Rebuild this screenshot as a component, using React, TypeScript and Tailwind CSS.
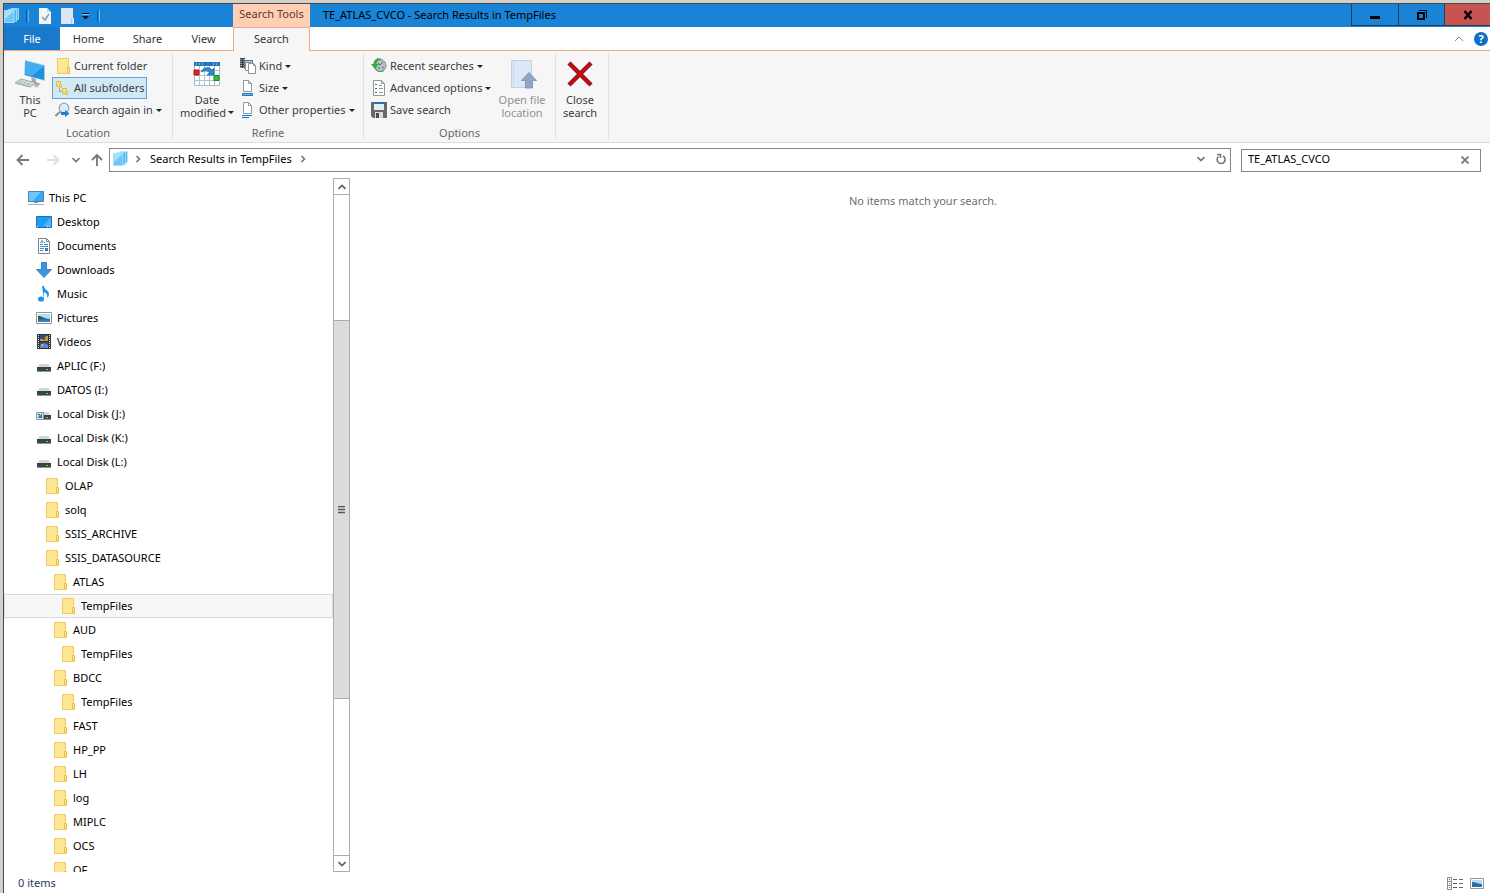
import React from 'react';
import clsx from 'clsx';

type IconProps = { className?: string };

const FolderIcon: React.FC<IconProps> = ({ className = 'size-4' }) => (
  <svg viewBox="0 0 16 16" className={className} aria-hidden="true">
    <path d="M2.500 0.500h11v15h-11z" fill="#fde694" stroke="#f0cb5c" />
    <path d="M12.500 9.500h2v6h-2z" fill="#fde694" stroke="#e8bd45" />
  </svg>
);

const SubfoldersIcon: React.FC = () => (
  <svg viewBox="0 0 16 16" className="size-4" aria-hidden="true">
    <path d="M4.500 6v5.500h4" fill="none" stroke="#8aa9c0" />
    <path d="M1.500 1.500h4v5h-4zM7.500 8.500h4v5h-4z" fill="#fbe28a" stroke="#e6bb40" />
    <path d="M4.500 4.500h2v3h-2zM10.500 11.500h2v3h-2z" fill="#fdeaa0" stroke="#e6bb40" />
  </svg>
);

const SearchFolderIcon: React.FC<IconProps> = ({ className = 'size-4' }) => (
  <svg viewBox="0 0 16 16" className={className} aria-hidden="true">
    <path d="M7 0.500h7.500v11H7z" fill="#5cb8ee" stroke="#c2e9ff" strokeWidth="0.700" />
    <path d="M4 1.500h8.500v12H4z" fill="#4eb3ef" stroke="#bfe7fd" strokeWidth="0.700" />
    <path d="M0.500 2.500h9.500v12h-9.500z" fill="#6fc9f7" stroke="#a5ddfa" />
    <path d="M1 3h8.500L1 11z" fill="#a3e0fb" />
  </svg>
);

const ComputerIcon: React.FC = () => (
  <svg viewBox="0 0 16 16" className="size-4" aria-hidden="true">
    <path d="M0.500 1.500h15v10h-15z" fill="#35a8f5" stroke="#4d86a8" />
    <path d="M1 2h12L5 11H1z" fill="#6cc5fb" />
    <path d="M6 12.500h4" stroke="#7897a8" />
    <path d="M0 14.500h16" stroke="#8fb4c5" />
  </svg>
);

const DesktopIcon: React.FC = () => (
  <svg viewBox="0 0 16 16" className="size-4" aria-hidden="true">
    <path d="M0.500 2.500h15v11h-15z" fill="#1e9bf3" stroke="#1673c4" />
    <path d="M15 3v9L7 12z" fill="#4cb4fa" />
    <path d="M1 12.500h1M11 12.500h1M13 12.500h1" stroke="#fff" />
  </svg>
);

const DocumentsIcon: React.FC = () => (
  <svg viewBox="0 0 16 16" className="size-4" aria-hidden="true">
    <path d="M2.500 0.500h8l3 3v12h-11z" fill="#fff" stroke="#7d8588" />
    <path d="M10.500 0.500v3h3" fill="none" stroke="#7d8588" />
    <path d="M4 6.500h3M8 4.500h1M8 6.500h4M4 8.500h8M4 10.500h4M4 12.500h3" stroke="#3292c9" />
    <path d="M4.500 5l1.500-2.500L7 5" fill="none" stroke="#3292c9" />
    <path d="M9 10h3v3H9z" fill="#467c91" />
  </svg>
);

const DownloadsIcon: React.FC = () => (
  <svg viewBox="0 0 16 16" className="size-4" aria-hidden="true">
    <path d="M5.500 0.500h5v7h5L8 15.500 0.500 7.500h5z" fill="#3c96df" stroke="#3b83c4" />
  </svg>
);

const MusicIcon: React.FC = () => (
  <svg viewBox="0 0 16 16" className="size-4" aria-hidden="true">
    <path d="M6 0h2c0 4 5 4 5 8 0 2-1 3-2 4 1-4-1-5-3-6v7" fill="#1697ea" />
    <ellipse cx="5" cy="13" rx="3" ry="2.600" fill="#1697ea" />
  </svg>
);

const PictureIcon: React.FC = () => (
  <svg viewBox="0 0 16 16" className="size-4" aria-hidden="true">
    <path d="M0.500 2.500h15v11h-15z" fill="#fff" stroke="#8b989f" />
    <path d="M2 4h12v8H2z" fill="#b5dcf4" />
    <path d="M2 6c4 0 7 3 12 3v3H2z" fill="#2e6f9f" />
    <path d="M2 10c5 1 8-1 12 0v2H2z" fill="#3c7dc0" />
    <path d="M2 6c3 0 4 2 7 2.500L2 9z" fill="#315a48" />
  </svg>
);

const VideosIcon: React.FC = () => (
  <svg viewBox="0 0 16 16" className="size-4" aria-hidden="true">
    <path d="M1 0h14v15H1z" fill="#333" />
    <path d="M2.500 1v14M13.500 1v14" stroke="#eee" strokeDasharray="1 1" />
    <path d="M4 1h8v6H4zM4 8h8v6H4z" fill="#264f93" />
    <path d="M4 5h4l2-3h2v5H4z" fill="#c99e35" />
    <path d="M7 4h2v2H7z" fill="#b83524" />
    <path d="M4 12l4-3 4 2v3H4z" fill="#658acc" />
    <path d="M5 10h2v2H5z" fill="#d4b345" />
  </svg>
);

const DriveIcon: React.FC<{ shared?: boolean }> = ({ shared }) => (
  <svg viewBox="0 0 16 16" className="size-4" aria-hidden="true">
    <path d="M3.500 6h9l2 3.500h-13z" fill="#d3d6d6" />
    <path d="M1 9h14v5H1z" fill="#3b4242" />
    <path d="M1 13.500h14" stroke="#8b9494" />
    <path d="M10 11h2v1h-2z" fill="#5de35b" />
    {shared && (
      <>
        <path d="M0.500 6.500h7v7h-7z" fill="#d5e3ea" stroke="#8798a1" />
        <path d="M2 12l1-3 1 1 2-3v5z" fill="#397ea8" />
        <path d="M2 8h2v1H2z" fill="#4e5a60" />
      </>
    )}
  </svg>
);

const LargePcIcon: React.FC = () => (
  <svg viewBox="0 0 32 32" className="size-8" aria-hidden="true">
    <path d="M11 1l20 5v16L10 16z" fill="#b4cad6" />
    <path d="M11 2l19 5v14l-19-5z" fill="#1c91e6" />
    <path d="M11 2l19 5-12 10-7-2z" fill="#44adf2" />
    <path d="M17 18l5 2v3l5 2-4 2-9-3 4-2z" fill="#9daeb8" />
    <path d="M7 20l15 4-6 4-15-4z" fill="#e4e8eb" stroke="#9da5aa" />
    <path d="M5 22l14 4M3 23.500l14 4M9 21l-5 4M13 22l-5 4M17 23l-5 4" stroke="#a2a9ae" strokeWidth="0.700" />
    <path d="M22 26l3 1-2 1.500-3-1z" fill="#b0b6ba" />
  </svg>
);

const CalendarIcon: React.FC = () => (
  <svg viewBox="0 0 32 32" className="size-8" aria-hidden="true">
    <path d="M3.500 4.500h25v22h-25z" fill="#fff" stroke="#a6bac9" />
    <path d="M3 3h26v4H3z" fill="#2675bd" />
    <path d="M5 5h1M8 5h1M11 5h1M22 5h1M25 5h1" stroke="#c9e4f7" />
    <path d="M8.500 7v19M13.500 7v19M18.500 7v19M23.500 7v19M4 11.500h24M4 16.500h24M4 21.500h24" stroke="#adc4d3" />
    <path d="M3 11h5v5H3z" fill="#d92727" stroke="#a71515" />
    <path d="M23 16.500h5v5h-5z" fill="#35bd31" stroke="#188c19" />
    <path d="M10 13c2-5 8-6 11-2l2-2v7h-7l2.500-2.500c-2-2-5-2-8.500-0.500z" fill="#2e88cc" stroke="#1d6aaa" strokeWidth="0.700" />
  </svg>
);

const OpenLocationIcon: React.FC = () => (
  <svg viewBox="0 0 32 32" className="size-8" aria-hidden="true">
    <path d="M5.500 1.500h20v27h-20z" fill="#dce7f7" stroke="#c0d3ed" />
    <path d="M7.500 2v26" stroke="#c9d9ef" />
    <path d="M23 13.500l7.500 8h-4v7.500h-7v-7.500h-4z" fill="#91a5c5" stroke="#8499bb" />
  </svg>
);

const CloseSearchIcon: React.FC = () => (
  <svg viewBox="0 0 32 32" className="size-8" aria-hidden="true">
    <path d="M5 4l22 22M27 4L5 26" stroke="#8a0d12" strokeWidth="4.500" />
    <path d="M5.500 4.500l21 21M26.500 4.500l-21 21" stroke="#c20d14" strokeWidth="2.800" />
  </svg>
);

const SearchAgainIcon: React.FC = () => (
  <svg viewBox="0 0 16 16" className="size-4" aria-hidden="true">
    <path d="M5.500 9.500L0.500 14" stroke="#8796a0" strokeWidth="2" />
    <circle cx="9" cy="6" r="4.800" fill="#d8edfa" stroke="#93aab7" strokeWidth="1.300" />
    <path d="M6 10h4V8l4.500 3.500L10 15v-2H6z" fill="#267cc5" />
  </svg>
);

const KindIcon: React.FC = () => (
  <svg viewBox="0 0 16 16" className="size-4" aria-hidden="true">
    <path d="M0 0h5v10H0z" fill="#3b4247" />
    <path d="M1 1v9M4 1v9" stroke="#f1f1f1" strokeDasharray="1 1" />
    <path d="M4.500 2.500h8v8h-8z" fill="#b9c8d0" stroke="#62737c" />
    <path d="M5.500 4.500h5v8h-5z" fill="#fff" stroke="#8a9297" />
    <path d="M8.500 5.500h5l2 2v8h-7z" fill="#fff" stroke="#8a9297" />
    <path d="M13.500 5.500v2h2" fill="none" stroke="#8a9297" />
  </svg>
);

const PageIcon: React.FC<{ kind: 'size' | 'properties' | 'options' }> = ({ kind }) => (
  <svg viewBox="0 0 16 16" className="size-4" aria-hidden="true">
    {kind === 'options' ? (
      <>
        <path d="M2.500 0.500h8l3 3v12h-11z" fill="#fff" stroke="#8f989d" />
        <path d="M10.500 0.500v3h3" fill="none" stroke="#8f989d" />
        <path d="M4 4.500h2M4 8.500h2M4 12.500h2" stroke="#5a656b" />
        <path d="M8 5.500h3M8 8.500h4M8 12.500h4" stroke="#8f989d" />
      </>
    ) : (
      <>
        <path d="M3.500 0.500h5l3 3v8h-8z" fill="#fff" stroke="#92999d" />
        <path d="M8.500 0.500v3h3" fill="none" stroke="#92999d" />
        {kind === 'size' ? (
          <path d="M2.500 13.500h10v2h-10z" stroke="#1678ca" fill="#79b8e8" />
        ) : (
          <path d="M2 13.500h10M2 15.500h7" stroke="#1678ca" />
        )}
      </>
    )}
  </svg>
);

const RecentIcon: React.FC = () => (
  <svg viewBox="0 0 16 16" className="size-4" aria-hidden="true">
    <circle cx="9" cy="7.500" r="6" fill="#b6c2c6" stroke="#7d898e" />
    <path d="M9 7l3-3M9 7l-2-2M7 10h2M11 9l2 1" fill="none" stroke="#58656b" />
    <path d="M11 1C6-1 2.500 2 2.500 6H0l4 5 4-5H5.500C5.500 4 7 2 11 1z" fill="#35ad38" />
    <path d="M5 10.500c1 3 5 4 8 2" fill="none" stroke="#35ad38" />
  </svg>
);

const SaveIcon: React.FC = () => (
  <svg viewBox="0 0 16 16" className="size-4" aria-hidden="true">
    <path d="M0 0h16v16H2l-2-2z" fill="#656a6e" />
    <path d="M3 0h10v8H3z" fill="#e8edf0" />
    <path d="M3 0h10v2H3z" fill="#1675c2" />
    <path d="M4 10h8v6H4z" fill="#d7dbdd" />
    <path d="M5 11h3v5H5z" fill="#484d50" />
  </svg>
);

const Caret: React.FC = () => (
  <svg viewBox="0 0 6 3" className="inline-block h-[3px] w-1.5 shrink-0" aria-hidden="true">
    <path d="M0 0h6L3 3z" fill="#222" />
  </svg>
);

const Chevron: React.FC<{ direction: 'up' | 'down' | 'right'; className?: string }> = ({
  direction,
  className = 'size-2',
}) => (
  <svg viewBox="0 0 8 8" className={className} fill="none" stroke="currentColor" strokeWidth="1.700" aria-hidden="true">
    {direction === 'up' && <path d="M0.500 6L4 2.500 7.500 6" />}
    {direction === 'down' && <path d="M0.500 2L4 5.500 7.500 2" />}
    {direction === 'right' && <path d="M2.500 1l3 3-3 3" />}
  </svg>
);

const Arrow: React.FC<{ direction: 'left' | 'right' | 'up' }> = ({ direction }) => (
  <svg viewBox="0 0 14 14" className="size-3.5" fill="none" stroke="currentColor" strokeWidth="1.800" aria-hidden="true">
    {direction === 'left' && <path d="M13 7H2M6.500 2L1.500 7l5 5" />}
    {direction === 'right' && <path d="M1 7h11M7.500 2l5 5-5 5" />}
    {direction === 'up' && <path d="M7 13V2M2 7l5-5 5 5" />}
  </svg>
);

type CommandProps = {
  icon: React.ReactNode;
  label: string;
  menu?: boolean;
  active?: boolean;
};

const Command: React.FC<CommandProps> = ({ icon, label, menu, active }) => (
  <button
    type="button"
    aria-pressed={active}
    className={clsx(
      'flex h-[22px] items-center gap-[3px] border px-0.5 whitespace-nowrap',
      active ? 'border-[#62a2d8] bg-[#d1e8f5]' : 'border-transparent',
    )}
  >
    {icon}
    <span>{label}</span>
    {menu && <Caret />}
  </button>
);

type BigCommandProps = {
  icon: React.ReactNode;
  lines: [string, string];
  width: string;
  menu?: boolean;
  disabled?: boolean;
};

const BigCommand: React.FC<BigCommandProps> = ({ icon, lines, width, menu, disabled }) => (
  <button
    type="button"
    disabled={disabled}
    className={clsx('flex flex-col items-center pt-1 leading-[13px]', width, disabled && 'text-[#929292]')}
  >
    {icon}
    <span className="pt-0.5">{lines[0]}</span>
    <span className="flex items-center gap-0.5 whitespace-nowrap">
      {lines[1]}
      {menu && <Caret />}
    </span>
  </button>
);

const RibbonGroup: React.FC<{ label?: string; className?: string; children: React.ReactNode }> = ({
  label,
  className,
  children,
}) => (
  <section
    aria-label={label}
    className={clsx('mt-0.5 mb-[3px] flex flex-col justify-between border-r border-[#e1e2e3] pt-0.5', className)}
  >
    <div className="flex">{children}</div>
    {label && <div className="text-center leading-3 text-[#666]">{label}</div>}
  </section>
);

const tabs = [
  { name: 'Home', width: 'w-[57px]' },
  { name: 'Share', width: 'w-[61px]' },
  { name: 'View', width: 'w-[51px]' },
];

const TitleBar: React.FC = () => (
  <header className="flex h-[23px] shrink-0 bg-[#1883d7]">
    <div className="flex w-[229px] items-center">
      <SearchFolderIcon />
      <span className="ml-1.5 h-3 w-[3px] border-x border-x-[#0d5fa4] border-r-[#68b3ec]" />
      <button type="button" aria-label="Properties" className="ml-2">
        <svg viewBox="0 0 16 16" className="size-4">
          <path d="M2 0h8l4 4v12H2z" fill="#f3f5f8" />
          <path d="M10 0v4h4" fill="#c6d2de" />
          <path d="M5 9l3 3 4-6" fill="none" stroke="#7e9bbb" strokeWidth="1.500" />
        </svg>
      </button>
      <button type="button" aria-label="New folder" className="ml-1.5">
        <svg viewBox="0 0 16 16" className="size-4">
          <path d="M2 0h12v10h1v6H2z" fill="#dbe6f5" />
          <path d="M12.500 10v6" stroke="#b5cbe4" />
        </svg>
      </button>
      <button type="button" aria-label="Customize Quick Access Toolbar" className="ml-1.5">
        <svg viewBox="0 0 9 8" className="h-2 w-[9px]">
          <path d="M1 1.500h7" stroke="#0d1526" />
          <path d="M1 4h7L4.500 7.500z" fill="#0d1526" />
          <path d="M1 2.500h7" stroke="#8dbce3" />
        </svg>
      </button>
      <span className="ml-[7px] h-3 w-[3px] border-x border-x-[#0d5fa4] border-r-[#68b3ec]" />
    </div>
    <div className="flex w-[77px] items-center justify-center bg-[#ffceb3] pb-0.5 whitespace-nowrap text-[#5b3a29]">
      Search Tools
    </div>
    <h1 className="flex min-w-0 flex-1 items-center truncate pl-[13px] text-black">
      TE_ATLAS_CVCO - Search Results in TempFiles
    </h1>
    <div className="flex h-[22px] divide-x divide-[#263e52] border-b border-l border-[#263e52]">
      <button type="button" aria-label="Minimize" className="flex w-[47px] items-center justify-center">
        <svg viewBox="0 0 10 10" className="size-2.5">
          <path d="M0 6h10v3H0z" />
        </svg>
      </button>
      <button type="button" aria-label="Restore" className="flex w-[46px] items-center justify-center">
        <svg viewBox="0 0 10 10" className="size-2.5" fill="none" stroke="#000">
          <path d="M1 3h6v6H1z" strokeWidth="2" />
          <path d="M2 0.500h7.500V8" />
        </svg>
      </button>
      <button type="button" aria-label="Close" className="flex w-[45px] items-center justify-center bg-[#c75450]">
        <svg viewBox="0 0 10 10" className="size-2.5" stroke="#000" strokeWidth="2.500">
          <path d="M1.500 1l7 8M8.500 1l-7 8" />
        </svg>
      </button>
    </div>
  </header>
);

const TabRow: React.FC = () => (
  <nav className="flex h-6 shrink-0" aria-label="Ribbon tabs">
    <div className="flex w-[229px] border-b border-[#eeaa83]">
      <button type="button" className="w-14 bg-[#1979ca] pt-px text-white">
        File
      </button>
      {tabs.map((tab) => (
        <button type="button" key={tab.name} className={clsx('pt-px', tab.width)}>
          {tab.name}
        </button>
      ))}
    </div>
    <button type="button" aria-current="page" className="w-[77px] border-x border-t border-[#eeaa83] bg-[#f6f6f6]">
      Search
    </button>
    <div className="flex flex-1 items-center justify-end gap-2.5 border-b border-[#eeaa83] pr-0.5">
      <button type="button" aria-label="Minimize the Ribbon" className="text-[#8d8d8d]">
        <svg viewBox="0 0 10 6" className="h-1.5 w-2.5" fill="none" stroke="currentColor">
          <path d="M1 5l4-4 4 4" />
        </svg>
      </button>
      <button
        type="button"
        aria-label="Help"
        className="flex size-3.5 items-center justify-center rounded-full bg-[#0f6fc6] leading-none font-bold text-white"
      >
        ?
      </button>
    </div>
  </nav>
);

const Ribbon: React.FC = () => (
  <div className="flex h-[92px] shrink-0 border-b border-[#dadbdc] bg-[#f6f6f6] text-[#3b3b3b]">
    <RibbonGroup label="Location" className="w-[169px]">
      <BigCommand icon={<LargePcIcon />} lines={['This', 'PC']} width="w-12 pl-1" />
      <div className="flex flex-col items-start">
        <Command icon={<FolderIcon />} label="Current folder" />
        <Command icon={<SubfoldersIcon />} label="All subfolders" active />
        <Command icon={<SearchAgainIcon />} label="Search again in" menu />
      </div>
    </RibbonGroup>
    <RibbonGroup label="Refine" className="w-[191px]">
      <BigCommand icon={<CalendarIcon />} lines={['Date', 'modified']} width="w-16 pl-1" menu />
      <div className="flex flex-col items-start">
        <Command icon={<KindIcon />} label="Kind" menu />
        <Command icon={<PageIcon kind="size" />} label="Size" menu />
        <Command icon={<PageIcon kind="properties" />} label="Other properties" menu />
      </div>
    </RibbonGroup>
    <RibbonGroup label="Options" className="w-48">
      <div className="flex w-[132px] flex-col items-start pl-1">
        <Command icon={<RecentIcon />} label="Recent searches" menu />
        <Command icon={<PageIcon kind="options" />} label="Advanced options" menu />
        <Command icon={<SaveIcon />} label="Save search" />
      </div>
      <BigCommand icon={<OpenLocationIcon />} lines={['Open file', 'location']} width="w-[52px]" disabled />
    </RibbonGroup>
    <RibbonGroup className="w-[53px]">
      <BigCommand icon={<CloseSearchIcon />} lines={['Close', 'search']} width="w-12" />
    </RibbonGroup>
  </div>
);

const AddressBar: React.FC = () => (
  <div className="flex h-[35px] shrink-0 items-center pr-[9px] pb-px pl-3 text-[#777]">
    <button type="button" aria-label="Back">
      <Arrow direction="left" />
    </button>
    <button type="button" aria-label="Forward" disabled className="ml-4 text-[#ddd]">
      <Arrow direction="right" />
    </button>
    <button type="button" aria-label="Recent locations" className="ml-3">
      <Chevron direction="down" />
    </button>
    <button type="button" aria-label="Up" className="ml-2.5">
      <Arrow direction="up" />
    </button>
    <div className="ml-[5px] flex h-6 flex-1 items-center border border-[#858585] pr-[3px] pb-0.5 pl-[3px]">
      <SearchFolderIcon />
      <span className="ml-[5px]">
        <Chevron direction="right" />
      </span>
      <a href="#results" className="ml-2 whitespace-nowrap text-black">
        Search Results in TempFiles
      </a>
      <span className="ml-[7px]">
        <Chevron direction="right" />
      </span>
      <button type="button" aria-label="Previous locations" className="ml-auto">
        <Chevron direction="down" />
      </button>
      <button type="button" aria-label="Refresh" className="ml-2.5">
        <svg viewBox="0 0 12 12" className="size-3" fill="none" stroke="currentColor" strokeWidth="1.600">
          <path d="M8 3a4 4 0 1 1-4.500 0.500" />
          <path d="M2 1.500h3.500V5" />
        </svg>
      </button>
    </div>
    <div className="ml-2.5 flex h-[23px] w-60 items-center border border-[#858585] pr-[11px] pb-px pl-1.5">
      <input
        type="text"
        aria-label="Search TempFiles"
        defaultValue="TE_ATLAS_CVCO"
        className="min-w-0 flex-1 text-black outline-none"
      />
      <button type="button" aria-label="Clear search">
        <svg viewBox="0 0 8 8" className="size-2" stroke="currentColor" strokeWidth="1.800">
          <path d="M0.500 0.500l7 7M7.500 0.500l-7 7" />
        </svg>
      </button>
    </div>
  </div>
);

type TreeItem = { name: string; level: number; icon?: React.ReactNode; selected?: boolean };

const treeItems: TreeItem[] = [
  { name: 'This PC', level: 0, icon: <ComputerIcon /> },
  { name: 'Desktop', level: 1, icon: <DesktopIcon /> },
  { name: 'Documents', level: 1, icon: <DocumentsIcon /> },
  { name: 'Downloads', level: 1, icon: <DownloadsIcon /> },
  { name: 'Music', level: 1, icon: <MusicIcon /> },
  { name: 'Pictures', level: 1, icon: <PictureIcon /> },
  { name: 'Videos', level: 1, icon: <VideosIcon /> },
  { name: 'APLIC (F:)', level: 1, icon: <DriveIcon /> },
  { name: 'DATOS (I:)', level: 1, icon: <DriveIcon /> },
  { name: 'Local Disk (J:)', level: 1, icon: <DriveIcon shared /> },
  { name: 'Local Disk (K:)', level: 1, icon: <DriveIcon /> },
  { name: 'Local Disk (L:)', level: 1, icon: <DriveIcon /> },
  { name: 'OLAP', level: 2 },
  { name: 'solq', level: 2 },
  { name: 'SSIS_ARCHIVE', level: 2 },
  { name: 'SSIS_DATASOURCE', level: 2 },
  { name: 'ATLAS', level: 3 },
  { name: 'TempFiles', level: 4, selected: true },
  { name: 'AUD', level: 3 },
  { name: 'TempFiles', level: 4 },
  { name: 'BDCC', level: 3 },
  { name: 'TempFiles', level: 4 },
  { name: 'FAST', level: 3 },
  { name: 'HP_PP', level: 3 },
  { name: 'LH', level: 3 },
  { name: 'log', level: 3 },
  { name: 'MIPLC', level: 3 },
  { name: 'OCS', level: 3 },
  { name: 'OF', level: 3 },
];

const indents = ['pl-[23px]', 'pl-[31px]', 'pl-[39px]', 'pl-[47px]', 'pl-[55px]'];

const NavigationTree: React.FC = () => (
  <nav aria-label="Folders" className="w-[329px] shrink-0 overflow-hidden pt-2">
    <ul>
      {treeItems.map((item, i) => (
        <li key={i}>
          <button
            type="button"
            className={clsx(
              'flex h-6 w-full items-center gap-[5px] border',
              indents[item.level],
              item.selected ? 'border-[#dadada] bg-[#f7f7f7]' : 'border-transparent',
            )}
          >
            {item.icon ?? <FolderIcon />}
            {item.name}
          </button>
        </li>
      ))}
    </ul>
  </nav>
);

const ScrollBar: React.FC = () => (
  <div className="flex w-[17px] shrink-0 flex-col border border-[#acacac] text-[#606060]">
    <button type="button" aria-label="Scroll up" className="flex h-4 items-center justify-center border-b border-[#acacac]">
      <Chevron direction="up" />
    </button>
    <div className="grow-[125] basis-0" />
    <div className="flex grow-[379] basis-0 items-center justify-center border-y border-[#acacac] bg-[#dcdcdc]">
      <svg viewBox="0 0 7 8" className="h-2 w-[7px]" stroke="#555" aria-hidden="true">
        <path d="M0 0.500h7M0 3.500h7M0 6.500h7" strokeWidth="1.500" />
      </svg>
    </div>
    <div className="grow-[156] basis-0" />
    <button type="button" aria-label="Scroll down" className="flex h-4 items-center justify-center border-t border-[#acacac]">
      <Chevron direction="down" />
    </button>
  </div>
);

const StatusBar: React.FC = () => (
  <footer className="flex h-[21px] shrink-0 items-center justify-between pt-0.5 pr-[5px] pl-3.5 text-[#1e395b]">
    <span>0 items</span>
    <div className="flex gap-1.5">
      <button type="button" aria-label="Details view">
        <svg viewBox="0 0 16 16" className="size-4" fill="none" stroke="#8b8b8b">
          <path d="M0.500 1.500h4v4h-4zM0.500 5.500h4v4h-4zM0.500 9.500h4v4h-4z" />
          <path d="M2 3.500h1M2 7.500h1M2 11.500h1M6 3.500h4M12 3.500h4M6 7.500h4M12 7.500h4M6 11.500h4M12 11.500h4" stroke="#666" />
        </svg>
      </button>
      <button type="button" aria-label="Large icons view">
        <svg viewBox="0 0 16 16" className="size-4">
          <path d="M1.500 2.500h13v10h-13z" fill="#fff" stroke="#8b989f" />
          <path d="M3 4h10v7H3z" fill="#b5dcf4" />
          <path d="M3 6c4 0 6 2 10 2v3H3z" fill="#2e6f9f" />
        </svg>
      </button>
    </div>
  </footer>
);

const App: React.FC = () => {
  return (
    <div className="h-screen bg-[#d2d1c9] pt-[3px] pl-[3px] font-['Noto_Sans','Open_Sans',sans-serif] text-[11px] text-[#333]">
      <div className="flex h-full flex-col overflow-hidden border-t border-l border-[#4a4a46] bg-white">
        <TitleBar />
        <TabRow />
        <Ribbon />
        <AddressBar />
        <div className="flex min-h-0 flex-1 text-black">
          <NavigationTree />
          <ScrollBar />
          <main id="results" className="flex-1 pt-[15px] pl-1.5 text-center text-[#6d6d6d]">
            <p>No items match your search.</p>
          </main>
        </div>
        <StatusBar />
      </div>
    </div>
  );
};

export default App;
